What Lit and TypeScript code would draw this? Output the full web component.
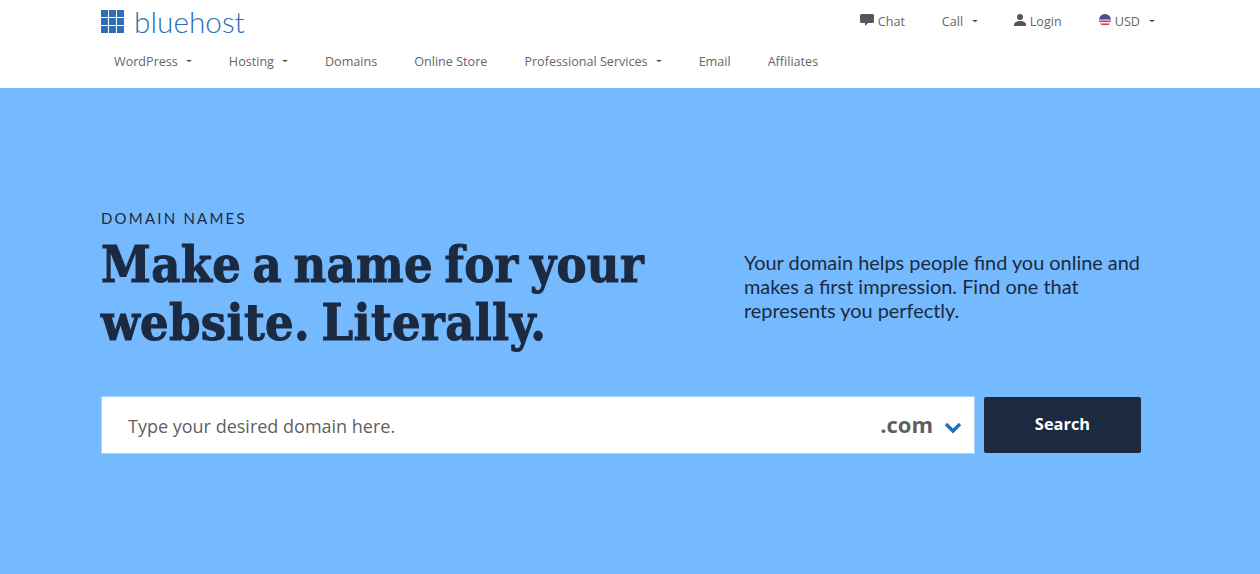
import { LitElement, css, html, svg } from "lit";
import { customElement } from "lit/decorators.js";

const caret = html`<span class="caret"></span>`;

@customElement("app-root")
export class AppRoot extends LitElement {
    static styles = css`
        :host {
            display: block;
            height: 574px;
            overflow: hidden;
            background-color: #75b9ff;
            color: #1b2a41;
        }
        header {
            height: 88px;
            box-sizing: border-box;
            background-color: #fff;
            padding: 0 105px 0 101px;
            font-family: "Open Sans", sans-serif;
            font-size: 12.6px;
            color: #666;
        }
        .top {
            height: 42px;
            display: flex;
            justify-content: space-between;
            align-items: flex-start;
        }
        .logo {
            display: flex;
            align-items: center;
            gap: 10px;
            padding-top: 9px;
            font-family: "Lato", sans-serif;
            font-weight: 300;
            font-size: 29.8px;
            line-height: 30px;
            color: #2f6fb3;
        }
        .logo svg {
            display: block;
            margin-top: -3px;
        }
        .logo span {
            margin-top: -2px;
        }
        .utils {
            display: flex;
            align-items: center;
            height: 42px;
        }
        .util {
            display: flex;
            align-items: center;
            gap: 4px;
        }
        .util svg {
            margin-top: -2px;
        }
        .chat { width: 82px; }
        .call { width: 72px; }
        .login { width: 85px; }
        .caret {
            display: inline-block;
            width: 0;
            height: 0;
            margin-left: 5px;
            border-left: 3px solid transparent;
            border-right: 3px solid transparent;
            border-top: 2px solid #444;
        }
        nav {
            display: flex;
            gap: 37px;
            padding-left: 13px;
            height: 38px;
            align-items: center;
        }
        nav span.item {
            display: flex;
            align-items: center;
        }
        nav .caret {
            margin-left: 8px;
        }
        .hero {
            padding: 121px 119px 0 101px;
        }
        .eyebrow {
            font-family: "Lato", sans-serif;
            font-size: 15px;
            letter-spacing: 2.2px;
            line-height: 18px;
        }
        .intro {
            display: flex;
            justify-content: space-between;
            align-items: flex-start;
            padding-top: 9px;
        }
        h1 {
            margin: 0;
            font-family: "DejaVu Serif", serif;
            font-stretch: condensed;
            font-weight: 700;
            font-size: 50px;
            line-height: 58px;
            letter-spacing: 0.36px;
            word-spacing: -4.6px;
            white-space: nowrap;
            -webkit-text-stroke: 1px #1b2a41;
        }
        .blurb {
            width: 397px;
            margin: 14px 0 0;
            font-family: "Lato", sans-serif;
            font-size: 19.9px;
            line-height: 24px;
        }
        form {
            display: flex;
            gap: 9px;
            margin-top: 44px;
        }
        .field {
            flex: 1;
            height: 58px;
            box-sizing: border-box;
            background-color: #fff;
            border: 1px solid #a9d2fb;
            display: flex;
            align-items: center;
            padding: 1px 12px 0 26px;
            font-family: "Open Sans", sans-serif;
            font-size: 18px;
            color: #5f5f5f;
        }
        .placeholder {
            flex: 1;
        }
        .tld {
            font-weight: 700;
            font-size: 22px;
            margin: -3px 11px 0 0;
        }
        .field svg {
            margin-top: 4px;
        }
        button {
            width: 157px;
            height: 56px;
            margin-top: 1px;
            padding-bottom: 4px;
            border: none;
            border-radius: 2px;
            background-color: #1b2a41;
            color: #fff;
            font-family: "Open Sans", sans-serif;
            font-weight: 700;
            font-size: 16.4px;
        }
    `

    render() {
        return html`
            <header>
                <div class="top">
                    <div class="logo">
                        <svg width="23" height="23" viewBox="0 0 23 23" fill="#2f6fb3">
                            ${[0, 8, 16].map((y) => [0, 8, 16].map((x) => svg`<rect x=${x} y=${y} width="7" height="7"></rect>`))}
                        </svg>
                        <span>bluehost</span>
                    </div>
                    <div class="utils">
                        <span class="util chat">
                            <svg width="14" height="12" viewBox="0 0 14 12" fill="#555"><path d="M1.500 0h11A1.500 1.500 0 0 1 14 1.500v6A1.500 1.500 0 0 1 12.500 9H8l-3 3V9H1.500A1.500 1.500 0 0 1 0 7.500v-6A1.500 1.500 0 0 1 1.500 0z"></path></svg>
                            Chat
                        </span>
                        <span class="util call">Call ${caret}</span>
                        <span class="util login">
                            <svg width="12" height="12" viewBox="0 0 12 12" fill="#555"><circle cx="6" cy="3" r="3"></circle><path d="M0 12v-1.500C0 8.500 2.800 7 6 7s6 1.500 6 3.500V12z"></path></svg>
                            Login
                        </span>
                        <span class="util">
                            <svg width="12" height="12" viewBox="0 0 12 12"><defs><clipPath id="flag"><circle cx="6" cy="6" r="6"></circle></clipPath></defs><g clip-path="url(#flag)"><rect width="12" height="12" fill="#f3e6ea"></rect><rect y="6.500" width="12" height="1.500" fill="#d9465a"></rect><rect y="9.500" width="12" height="1.500" fill="#d9465a"></rect><rect width="12" height="5.500" fill="#4a4f8f"></rect></g></svg>
                            USD ${caret}
                        </span>
                    </div>
                </div>
                <nav>
                    <span class="item">WordPress ${caret}</span>
                    <span class="item">Hosting ${caret}</span>
                    <span class="item">Domains</span>
                    <span class="item">Online Store</span>
                    <span class="item">Professional Services ${caret}</span>
                    <span class="item">Email</span>
                    <span class="item">Affiliates</span>
                </nav>
            </header>
            <section class="hero">
                <div class="eyebrow">DOMAIN NAMES</div>
                <div class="intro">
                    <h1>Make a name for your<br />website. Literally.</h1>
                    <p class="blurb">Your domain helps people find you online and makes a first impression. Find one that represents you perfectly.</p>
                </div>
                <form>
                    <div class="field">
                        <span class="placeholder">Type your desired domain here.</span>
                        <span class="tld">.com</span>
                        <svg width="18" height="12" viewBox="0 0 18 12" fill="none" stroke="#1f6fc0" stroke-width="3.4"><path d="M2 2l7 7 7-7"></path></svg>
                    </div>
                    <button type="button">Search</button>
                </form>
            </section>
        `
    }
}
